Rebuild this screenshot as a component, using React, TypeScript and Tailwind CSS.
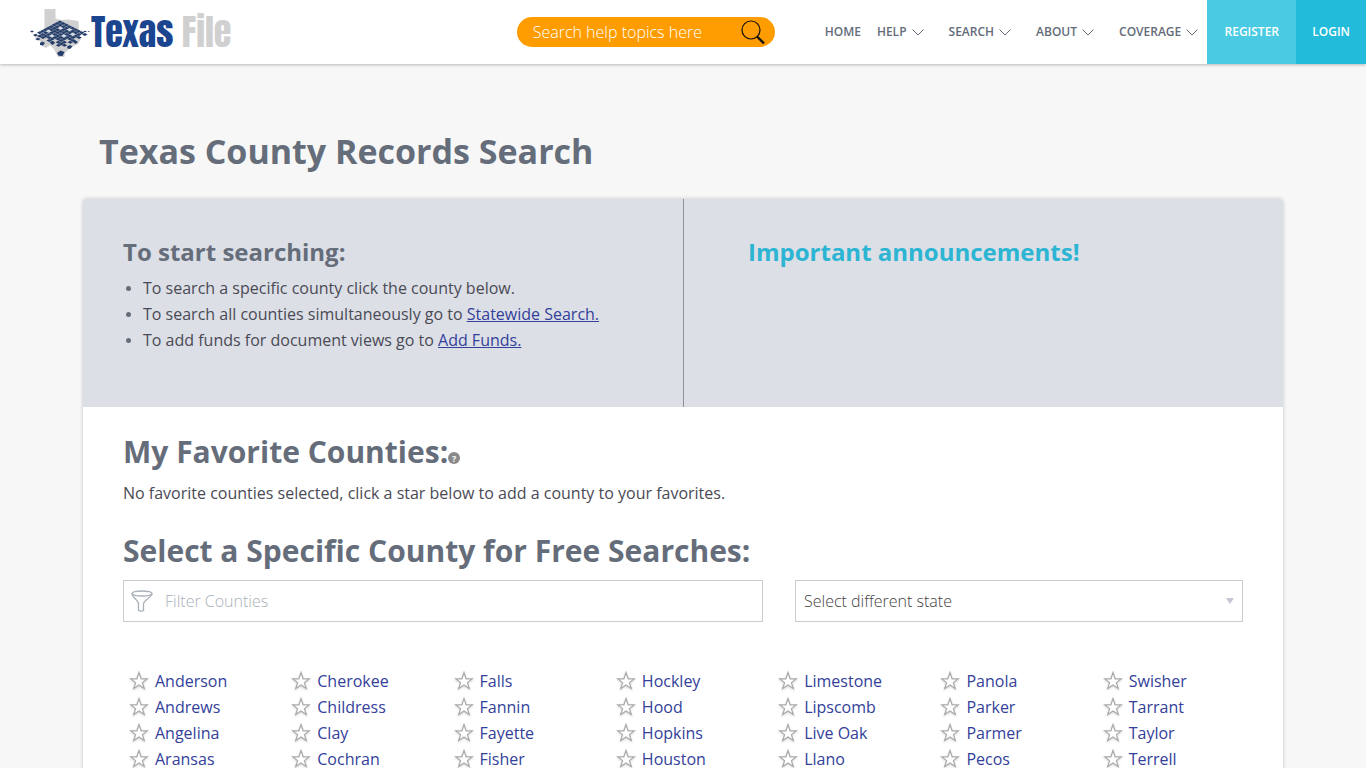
import React, { useState } from 'react';

const navItems = [
  { label: 'HELP' },
  { label: 'SEARCH' },
  { label: 'ABOUT' },
  { label: 'COVERAGE' },
];

const columns = [
  ['Anderson', 'Andrews', 'Angelina', 'Aransas'],
  ['Cherokee', 'Childress', 'Clay', 'Cochran'],
  ['Falls', 'Fannin', 'Fayette', 'Fisher'],
  ['Hockley', 'Hood', 'Hopkins', 'Houston'],
  ['Limestone', 'Lipscomb', 'Live Oak', 'Llano'],
  ['Panola', 'Parker', 'Parmer', 'Pecos'],
  ['Swisher', 'Tarrant', 'Taylor', 'Terrell'],
];

// skewed checkerboard laid over the state outline
const paleTiles = ['2-2', '4-1', '5-4', '3-6', '1-5', '6-2'];
const missingTiles = ['8-8', '8-6', '6-8', '7-5', '5-7', '0-8', '8-1', '8-3', '3-8'];
const tiles: { x: number; y: number; fill: string }[] = [];
for (let a = 0; a < 9; a++) {
  for (let b = 0; b < 9; b++) {
    const key = `${a}-${b}`;
    if (missingTiles.includes(key)) continue;
    tiles.push({
      x: 30 + (a - b) * 3 + (a + b) * 0.1,
      y: 15 + (a + b) * 1.55,
      fill: paleTiles.includes(key) ? '#d3dbe8' : '#253d69',
    });
  }
}

function LogoMark() {
  return (
    <svg viewBox="0 0 60 50" className="h-[50px] w-[60px]" aria-hidden="true">
      <path
        d="M14.500 2h11v9.500l5 1.500 7-.5 11 1.500.5 13 2 5-3 5-8 4-5 5-1 6-6-2-4-8-4-4-4 3-4-2-3-6-6-5h11.500z"
        fill="#d0d0d0"
      />
      {tiles.map((t, i) => (
        <path key={i} d={`M${t.x - 2.8} ${t.y}l2.800-1.500 2.800 1.500-2.800 1.500z`} fill={t.fill} />
      ))}
      <g fill="#253d69">
        <path d="M0 24.500l2-1 2 1-2 1zM53 24.500l2-.8 2 .8-2 .8zM57.500 24.500l1.200-.5 1.200.5-1.200.5z" />
        <path d="M3 28l2.500-1.300L8 28l-2.500 1.500zM5 32l3-1.300 2.500 1.300L8 33.500z" />
        <path d="M10 36l2.500-1.500L15 36l-2 2.500-3-.5zM20 36l2.500-1.500L25 36l-2.500 2z" />
        <path d="M37 39.500l3-1.500 2.500 1.500-2.500 2.500-2.500-.5zM43 35l2.500-1.500L48 35l-2.500 2z" />
        <path d="M27 46l3.500-2.500 4 1.500-2 4-4-.2z" />
      </g>
    </svg>
  );
}

function Star() {
  return (
    <svg viewBox="0 0 20 20" className="h-5 w-5 drop-shadow-[0_1px_1px_rgba(0,0,0,0.15)]" fill="#fff" stroke="#aaa" strokeWidth="1.2" aria-hidden="true">
      <path d="M10 1.500l2.100 6.300h6.300l-5 3.800 1.900 6-5.300-3.700-5.300 3.700 1.900-6-5-3.800h6.300z" />
    </svg>
  );
}

export default function App() {
  const [filter, setFilter] = useState('');

  return (
    <div className="min-h-screen bg-[#f7f7f7] font-['Open_Sans',sans-serif] text-base leading-relaxed text-[#4a4a55]">
      <header className="relative flex h-16 items-center justify-between bg-white shadow-[0_1px_3px_rgba(0,0,0,0.25)]">
        <a href="#" className="flex items-center pl-[30px]" aria-label="Texas File">
          <LogoMark />
          <span className="whitespace-pre pl-px font-['Impact','Anton','Open_Sans_Condensed','Roboto_Condensed','Roboto',sans-serif] text-[36px] leading-none font-normal text-[#1b458f]">
            Texas <span className="text-[#d0d0d0]">File</span>
          </span>
        </a>

        <div className="flex h-full items-center">
          <form className="mr-[50px] flex h-[30px] w-[258px] items-center rounded-full bg-[#ff9c00] pr-[9px] pl-4">
            <input
              type="text"
              aria-label="Search help topics"
              placeholder="Search help topics here"
              className="min-w-0 flex-1 bg-transparent font-light text-white outline-none placeholder:text-white"
            />
            <button type="button" aria-label="Search help">
              <svg viewBox="0 0 26 26" className="h-[26px] w-[26px]" fill="none" stroke="#111" aria-hidden="true">
                <circle cx="11" cy="11" r="9" strokeWidth="1.2" />
                <path d="M17 17.500l7 7" strokeWidth="2.4" />
              </svg>
            </button>
          </form>

          <nav className="flex h-full items-center text-xs font-semibold text-[#646c7a]">
            <a href="#" className="mr-4">HOME</a>
            {navItems.map((item) => (
              <a key={item.label} href="#" className="mr-6 flex items-center gap-1 last-of-type:mr-2">
                {item.label}
                <svg viewBox="0 0 14 14" className="h-[14px] w-[14px]" fill="none" stroke="#646c7a" aria-hidden="true">
                  <path d="M1.500 4.500L7 10l5.500-5.500" />
                </svg>
              </a>
            ))}
          </nav>
          <a href="#" className="flex h-full min-w-[89px] items-center justify-center bg-[#4bcbe3] px-4 text-xs font-semibold text-white">
            REGISTER
          </a>
          <a href="#" className="flex h-full items-center bg-[#22bbd9] px-4 text-xs font-semibold text-white">LOGIN</a>
        </div>
      </header>

      <main className="mx-auto max-w-[1200px] pt-[63px]">
        <h1 className="mb-6 pl-4 text-[34px] leading-[48px] font-bold text-[#656d7a]">Texas County Records Search</h1>

        <div className="rounded-t-[3px] bg-white shadow-[0_0_4px_rgba(0,0,0,0.2)]">
          <div className="grid min-h-[208px] grid-cols-2 rounded-t-[3px] bg-[#dcdfe6]">
            <section className="px-10 pt-[35px]">
              <h3 className="text-2xl leading-9 font-bold text-[#656d7a]">To start searching:</h3>
              <ul className="mt-[5px] list-disc pl-5 marker:text-sm marker:text-[#656d7a]">
                <li>To search a specific county click the county below.</li>
                <li>
                  To search all counties simultaneously go to <a href="#" className="text-[#33419a] underline">Statewide Search.</a>
                </li>
                <li>
                  To add funds for document views go to <a href="#" className="text-[#33419a] underline">Add Funds.</a>
                </li>
              </ul>
            </section>
            <section className="border-l border-[#8d9098] px-16 pt-[35px]">
              <h3 className="text-2xl leading-9 font-bold text-[#2cb5d3]">Important announcements!</h3>
            </section>
          </div>

          <div className="px-10 pt-6 pb-10">
            <h2 className="flex items-center text-[30px] leading-[42px] font-bold text-[#656d7a]">
              My Favorite Counties:
              <button
                type="button"
                aria-label="About favorite counties"
                className="mt-3 flex h-3 w-3 items-center justify-center rounded-full bg-[#8a8a8a] text-[9px] leading-none font-bold text-white"
              >
                ?
              </button>
            </h2>
            <p className="mt-[7px]">No favorite counties selected, click a star below to add a county to your favorites.</p>
            <h2 className="mt-6 text-[30px] leading-[42px] font-bold text-[#656d7a]">Select a Specific County for Free Searches:</h2>

            <div className="mt-2 grid grid-cols-[10fr_7fr] gap-8">
              <label className="flex h-[42px] items-center border border-[#ccc] pl-[7px]">
                <svg viewBox="0 0 22 22" className="h-[22px] w-[22px]" fill="none" stroke="#a9b0b8" strokeWidth="1.3" aria-hidden="true">
                  <ellipse cx="11" cy="3.500" rx="10" ry="2.500" />
                  <path d="M1 3.500c0 3.500 6.500 7 6.500 10.500v6.500c1 .8 4 .8 5 0V14c0-3.500 8.500-7 8.500-10.500" />
                </svg>
                <input
                  type="text"
                  aria-label="Filter Counties"
                  placeholder="Filter Counties"
                  value={filter}
                  onChange={(e) => setFilter(e.target.value)}
                  className="ml-3 min-w-0 flex-1 font-light outline-none placeholder:text-[#a9b0b8]"
                />
              </label>
              <div className="relative">
                <select aria-label="State" className="h-[42px] w-full appearance-none border border-[#ccc] bg-white px-2 font-light text-[#444]">
                  <option>Select different state</option>
                </select>
                <svg viewBox="0 0 8 6" className="pointer-events-none absolute top-[18px] right-[9px] h-[6px] w-2" fill="#c4c6d4" aria-hidden="true">
                  <path d="M0 0h8L4 6z" />
                </svg>
              </div>
            </div>

            <div className="mt-[46px] grid grid-cols-7 gap-4">
              {columns.map((column) => (
                <ul key={column[0]}>
                  {column
                    .filter((name) => name.toLowerCase().includes(filter.toLowerCase()))
                    .map((name) => (
                      <li key={name} className="flex items-center gap-[6px] pl-[6px]">
                        <button type="button" aria-label={`Add ${name} to favorites`}>
                          <Star />
                        </button>
                        <a href="#" className="text-[#33419a]">{name}</a>
                      </li>
                    ))}
                </ul>
              ))}
            </div>
          </div>
        </div>
      </main>
    </div>
  );
}
